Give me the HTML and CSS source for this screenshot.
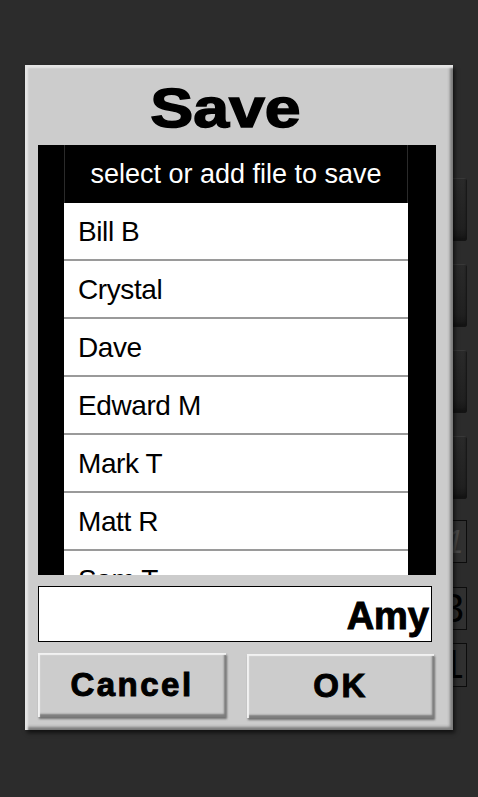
FILE: index.html
```html
<!DOCTYPE html>
<html lang="en">
<head>
    <meta charset="UTF-8">
    <meta name="viewport" content="width=device-width, initial-scale=1.0">
    <title>Save</title>
    <link rel="stylesheet" href="styles.css">
</head>
<body>
    <div class="app">
        <!-- page underneath the dialog, only its right edge shows -->
        <div class="side">
            <div class="key"></div>
            <div class="key"></div>
            <div class="key"></div>
            <div class="key"></div>
            <div class="box box-dim">1</div>
            <div class="box box-mid">3</div>
            <div class="box box-low">1</div>
        </div>

        <div class="dialog">
            <h1 class="title"><span class="title-text">Save</span></h1>

            <div class="file-list">
                <div class="list-head">select or add file to save</div>
                <div class="list-rows">
                    <div class="row">Bill B</div>
                    <div class="row">Crystal</div>
                    <div class="row">Dave</div>
                    <div class="row">Edward M</div>
                    <div class="row">Mark T</div>
                    <div class="row">Matt R</div>
                    <div class="row">Sam T</div>
                </div>
            </div>

            <div class="name-input">Amy</div>

            <div class="buttons">
                <button class="btn btn-cancel">Cancel</button>
                <button class="btn btn-ok">OK</button>
            </div>
        </div>
    </div>
</body>
</html>
```

FILE: styles.css
```css
body {
    margin: 0;
    background: #2c2c2c;
    font-family: "Liberation Sans", Arial, sans-serif;
}

.app {
    position: relative;
    height: 797px;
    overflow: hidden;
}

/* background page */
.side {
    width: 467px;
    padding-top: 178px;
    display: flex;
    flex-direction: column;
    align-items: flex-end;
}

.key {
    width: 90px;
    height: 63px;
    margin-bottom: 23px;
    border-radius: 3px;
    background: linear-gradient(180deg, #2a2a2a 0%, #202020 80%, #151515 100%);
    box-shadow: inset 1px 1px 0 #383838, inset -1px -3px 2px #141414;
}

.box {
    width: 90px;
    height: 43px;
    box-sizing: border-box;
    border: 1px solid #0c0c0c;
    background: #303030;
    text-align: right;
    padding-right: 2px;
    font-size: 40px;
    line-height: 41px;
    color: #000;
}

.box-dim {
    margin-top: -2px;
    color: #4a4a4a;
    font-style: italic;
    font-size: 34px;
}

.box-mid {
    margin-top: 24px;
}

.box-low {
    margin-top: 13px;
    height: 44px;
}

/* dialog */
.dialog {
    position: absolute;
    left: 25px;
    top: 65px;
    width: 428px;
    height: 665px;
    box-sizing: border-box;
    padding: 0 17px 12px 13px;
    background: #cccccc;
    box-shadow:
        inset 3px 3px 2px #e4e4e4,
        inset -3px -3px 3px #7a7a7a,
        2px 3px 4px rgba(0, 0, 0, 0.6);
    display: flex;
    flex-direction: column;
}

.title {
    margin: 0;
    height: 81px;
    line-height: 86px;
    padding-right: 24px;
    text-align: center;
    font-size: 56px;
    font-weight: bold;
    color: #000;
    overflow: hidden;
}

.title-text {
    display: inline-block;
    transform: scaleX(1.15);
    -webkit-text-stroke: 1.5px #000;
}

.file-list {
    height: 430px;
    background: #000;
    padding: 0 28px 0 26px;
    display: flex;
    flex-direction: column;
}

.list-head {
    height: 58px;
    line-height: 58px;
    flex-shrink: 0;
    text-align: center;
    color: #fff;
    font-size: 27px;
    box-shadow: inset 1px 0 0 #2a2a2a, inset -1px 0 0 #2a2a2a;
}

.list-rows {
    flex: 1;
    overflow: hidden;
    background: #fff;
}

.row {
    height: 56px;
    line-height: 58px;
    border-bottom: 2px solid #9a9a9a;
    padding-left: 14px;
    font-size: 28px;
    letter-spacing: -0.4px;
    color: #000;
}

.name-input {
    margin-top: 11px;
    width: 394px;
    height: 56px;
    box-sizing: border-box;
    border: 1px solid #000;
    background: #fff;
    text-align: right;
    padding-right: 2px;
    font-size: 38px;
    line-height: 58px;
    font-weight: bold;
    -webkit-text-stroke: 1px #000;
    overflow: hidden;
}

.buttons {
    margin-top: 11px;
    display: flex;
    gap: 21px;
}

.btn {
    width: 188px;
    height: 64px;
    border: none;
    padding: 0;
    background: #cccccc;
    font-family: "Liberation Sans", Arial, sans-serif;
    font-size: 33px;
    font-weight: bold;
    letter-spacing: 2.5px;
    -webkit-text-stroke: 1px #000;
    color: #000;
    box-shadow:
        inset 2px 2px 1px #f2f2f2,
        inset -2px -3px 2px #7c7c7c,
        1px 2px 2px rgba(0, 0, 0, 0.45);
}

.btn-ok {
    width: 187px;
    margin-top: 1px;
}
```
